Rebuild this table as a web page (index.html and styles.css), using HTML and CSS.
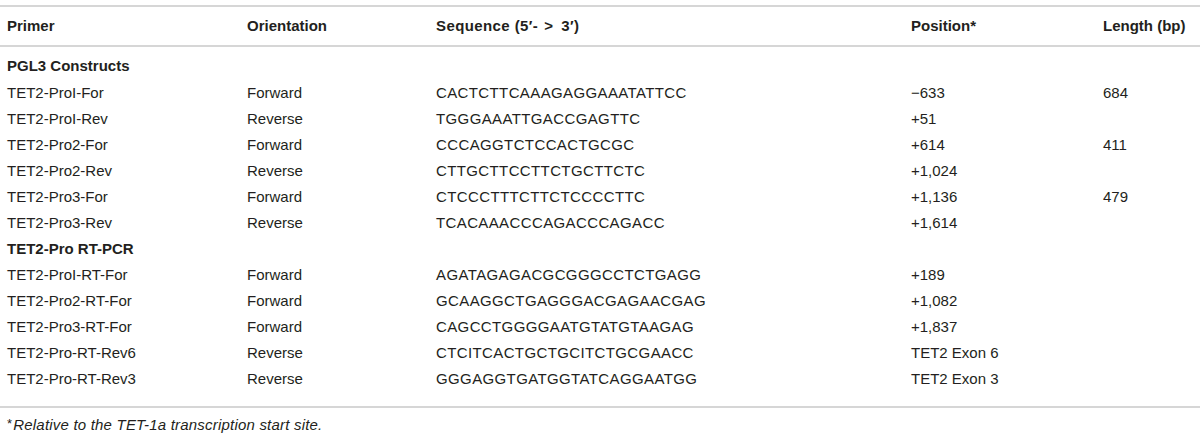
FILE: index.html
```html
<!DOCTYPE html>
<html lang="en">
<head>
<meta charset="utf-8">
<title>Primers</title>
<link rel="stylesheet" href="styles.css">
</head>
<body>
<table class="primers">
  <colgroup>
    <col class="c1"><col class="c2"><col class="c3"><col class="c4"><col class="c5">
  </colgroup>
  <thead>
    <tr>
      <th>Primer</th>
      <th>Orientation</th>
      <th class="seqhead">Sequence (5′-<span class="gt">&gt;</span>3′)</th>
      <th>Position*</th>
      <th>Length (bp)</th>
    </tr>
  </thead>
  <tbody>
    <tr class="group first"><td colspan="5">PGL3 Constructs</td></tr>
    <tr><td>TET2-ProI-For</td><td>Forward</td><td class="seq">CACTCTTCAAAGAGGAAATATTCC</td><td>−633</td><td>684</td></tr>
    <tr><td>TET2-ProI-Rev</td><td>Reverse</td><td class="seq">TGGGAAATTGACCGAGTTC</td><td>+51</td><td></td></tr>
    <tr><td>TET2-Pro2-For</td><td>Forward</td><td class="seq">CCCAGGTCTCCACTGCGC</td><td>+614</td><td>411</td></tr>
    <tr><td>TET2-Pro2-Rev</td><td>Reverse</td><td class="seq">CTTGCTTCCTTCTGCTTCTC</td><td>+1,024</td><td></td></tr>
    <tr><td>TET2-Pro3-For</td><td>Forward</td><td class="seq">CTCCCTTTCTTCTCCCCTTC</td><td>+1,136</td><td>479</td></tr>
    <tr><td>TET2-Pro3-Rev</td><td>Reverse</td><td class="seq">TCACAAACCCAGACCCAGACC</td><td>+1,614</td><td></td></tr>
    <tr class="group"><td colspan="5">TET2-Pro RT-PCR</td></tr>
    <tr><td>TET2-ProI-RT-For</td><td>Forward</td><td class="seq">AGATAGAGACGCGGGCCTCTGAGG</td><td>+189</td><td></td></tr>
    <tr><td>TET2-Pro2-RT-For</td><td>Forward</td><td class="seq">GCAAGGCTGAGGGACGAGAACGAG</td><td>+1,082</td><td></td></tr>
    <tr><td>TET2-Pro3-RT-For</td><td>Forward</td><td class="seq">CAGCCTGGGGAATGTATGTAAGAG</td><td>+1,837</td><td></td></tr>
    <tr><td>TET2-Pro-RT-Rev6</td><td>Reverse</td><td class="seq">CTCITCACTGCTGCITCTGCGAACC</td><td>TET2 Exon 6</td><td></td></tr>
    <tr class="last"><td>TET2-Pro-RT-Rev3</td><td>Reverse</td><td class="seq">GGGAGGTGATGGTATCAGGAATGG</td><td>TET2 Exon 3</td><td></td></tr>
  </tbody>
</table>
<p class="note"><span class="star">*</span>Relative to the TET-1a transcription start site.</p>
</body>
</html>
```

FILE: styles.css
```css
html, body {
  margin: 0;
  padding: 0;
  background: #ffffff;
}
body {
  font-family: "Liberation Sans", Arial, sans-serif;
  color: #231f20;
}
.primers {
  margin-top: 5px;
  width: 1200px;
  border-collapse: collapse;
  table-layout: fixed;
  font-size: 15px;
}
.c1 { width: 240px; }
.c2 { width: 189px; }
.c3 { width: 475px; }
.c4 { width: 192px; }
.c5 { width: 104px; }
.primers th {
  text-align: left;
  font-weight: bold;
  padding: 10px 0 10px 7px;
  line-height: 18px;
  border-top: 2px solid #d6d6d6;
  border-bottom: 2px solid #d6d6d6;
  white-space: nowrap;
}
.primers th.seqhead {
  letter-spacing: 0.4px;
}
.primers th.seqhead .gt {
  margin: 0 8px 0 6px;
}
.primers td {
  padding: 4px 0 4px 7px;
  line-height: 18px;
  white-space: nowrap;
}
.primers td.seq {
  letter-spacing: 0.38px;
}
.primers tr.group td {
  font-weight: bold;
}
.primers tr.first td {
  padding-top: 10px;
  padding-bottom: 5px;
}
.primers tr.last td {
  padding-bottom: 18px;
  border-bottom: 2px solid #d6d6d6;
}
.note {
  margin: 0;
  padding: 7px 0 0 7px;
  font-size: 15px;
  line-height: 17px;
  font-style: italic;
  letter-spacing: 0.2px;
}
.note .star {
  font-style: normal;
  font-size: 13px;
  vertical-align: 2px;
  margin-right: 1px;
}
```
